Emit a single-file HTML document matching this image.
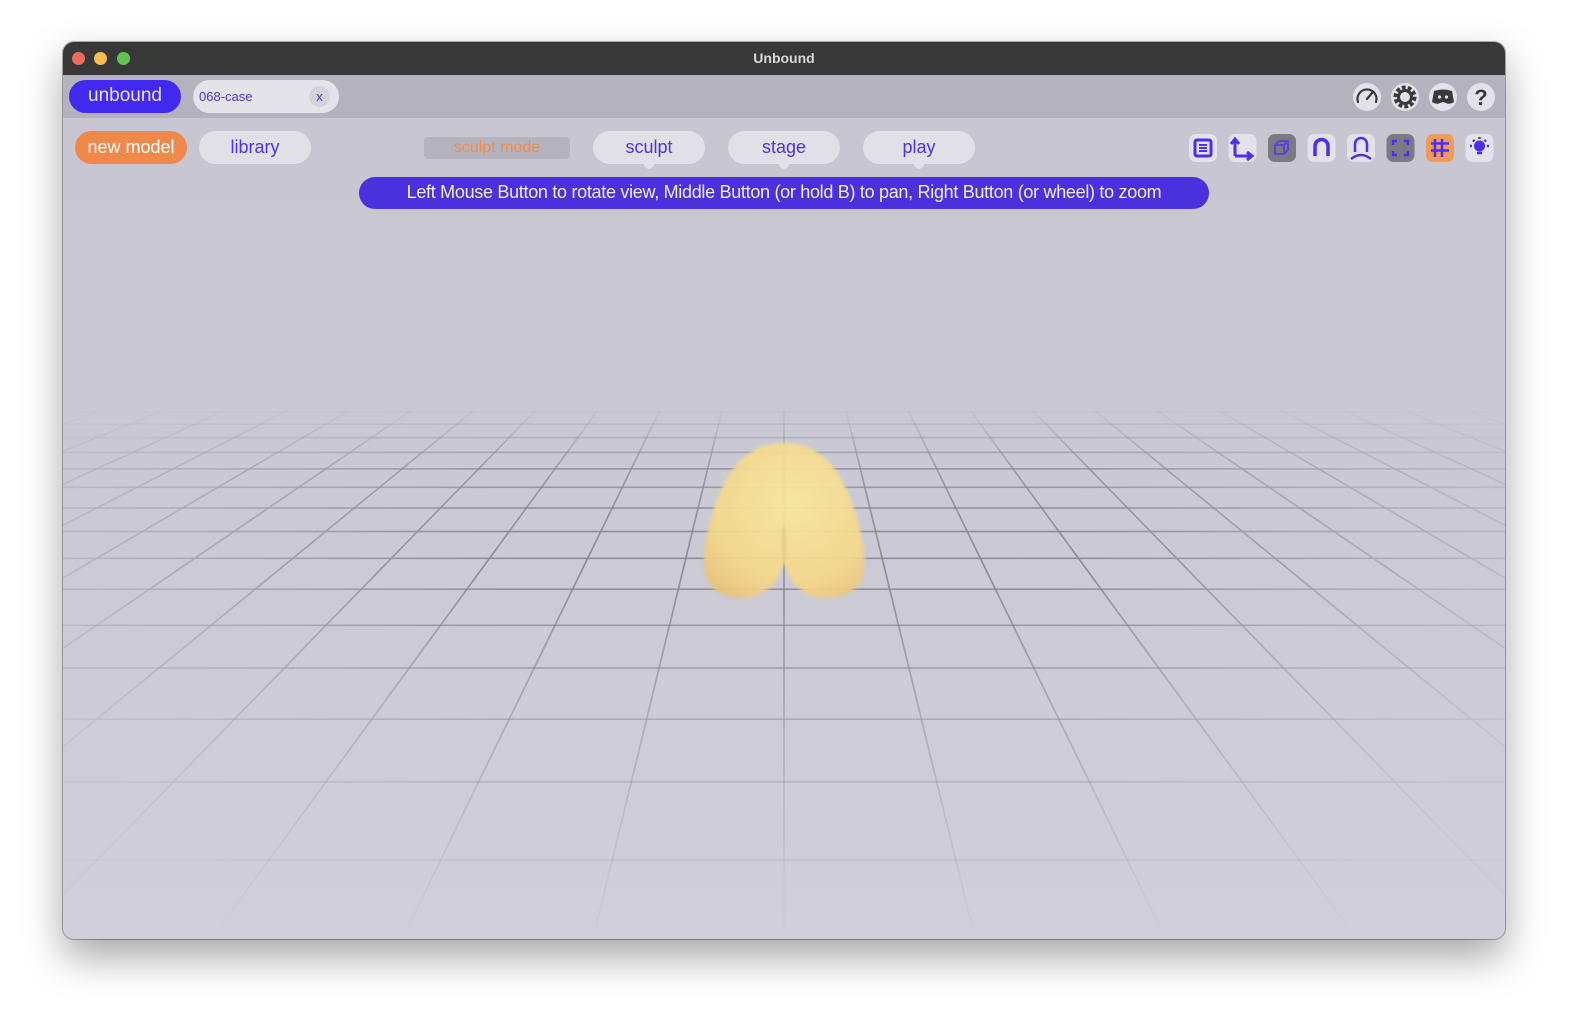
<!DOCTYPE html>
<html><head><meta charset="utf-8"><style>
*{margin:0;padding:0;box-sizing:border-box}
body{width:1570px;height:1024px;background:#fff;position:relative;overflow:hidden;font-family:"Liberation Sans",sans-serif}
.win{position:absolute;left:63px;top:42px;width:1442px;height:897px;border-radius:11px;overflow:hidden;box-shadow:0 18px 40px rgba(0,0,0,.35),0 0 0 1px rgba(0,0,0,.3);background:#cac9d3}
.title{position:absolute;left:0;top:0;width:100%;height:33px;background:#383838;color:#d8d8d8;font-weight:bold;font-size:14px;text-align:center;line-height:32px}
.dot{position:absolute;top:10px;width:13px;height:13px;border-radius:50%}
.tabs{position:absolute;left:0;top:33px;width:100%;height:43px;background:#b4b3bd}
.main{position:absolute;left:0;top:76px;width:100%;height:821px;background:linear-gradient(#c7c6d1,#cbc9d4 50%,#d0ced8);overflow:hidden}
.pill{position:absolute;border-radius:17px;text-align:center;font-size:18px}
</style></head><body>
<div class="win">
<div class="title">Unbound
<div class="dot" style="left:9px;background:#ec6a5e"></div>
<div class="dot" style="left:31px;background:#f4bf4f"></div>
<div class="dot" style="left:54px;background:#61c554"></div>
</div>
<div class="tabs"></div>
<div class="main">
<svg width="1570" height="1024" style="position:absolute;left:-63px;top:-118px">
<defs>
<linearGradient id="sg" gradientUnits="userSpaceOnUse" x1="0" y1="405" x2="0" y2="939">
<stop offset="0" stop-color="#878593" stop-opacity="0"/>
<stop offset="0.12" stop-color="#878593" stop-opacity="0.7"/>
<stop offset="0.3" stop-color="#878593" stop-opacity="0.9"/>
<stop offset="0.6" stop-color="#878593" stop-opacity="0.45"/>
<stop offset="1" stop-color="#878593" stop-opacity="0"/>
</linearGradient>
<linearGradient id="hg" gradientUnits="userSpaceOnUse" x1="63" y1="0" x2="1505" y2="0">
<stop offset="0" stop-color="#fff" stop-opacity="0.3"/>
<stop offset="0.3" stop-color="#fff" stop-opacity="1"/>
<stop offset="0.7" stop-color="#fff" stop-opacity="1"/>
<stop offset="1" stop-color="#fff" stop-opacity="0.3"/>
</linearGradient>
<mask id="hm" maskUnits="userSpaceOnUse" x="0" y="0" width="1570" height="1024"><rect x="0" y="0" width="1570" height="1024" fill="url(#hg)"/></mask>
<radialGradient id="bg" cx="0.55" cy="0.4" r="0.7">
<stop offset="0" stop-color="#f9e79e"/><stop offset="0.7" stop-color="#f6d98a"/><stop offset="1" stop-color="#e9c47c"/>
</radialGradient>
<filter id="bl" x="-10%" y="-10%" width="120%" height="120%"><feGaussianBlur stdDeviation="1.5"/></filter>
</defs>
<g stroke="url(#sg)" stroke-width="1.7" fill="none" mask="url(#hm)">
<path d="M0 960.6H1570M0 860H1570M0 781.8H1570M0 719.2H1570M0 668H1570M0 625.3H1570M0 589.2H1570M0 558.3H1570M0 531.5H1570M0 508H1570M0 487.3H1570M0 468.9H1570M0 452.4H1570M0 437.6H1570M0 424.2H1570M0 412H1570"/>
<path d="M784 410V939M846 410L975 939M908 410L1166 939M970 410L1357 939M1032 410L1548 939M1094 410L1740 939M1156 410L1931 939M1218 410L2122 939M1280 410L2313 939M1342 410L2504 939M1404 410L2695 939M1466 410L2886 939M1528 410L3077 939
M722 410L593 939M660 410L402 939M598 410L211 939M536 410L20 939M474 410L-172 939M412 410L-363 939M350 410L-554 939M288 410L-745 939M226 410L-936 939M164 410L-1127 939M102 410L-1318 939M40 410L-1509 939"/>
</g>
<g filter="url(#bl)">
<path d="M784 443C832 443 852 490 862 540C872 580 855 598 828 598C800 598 788 580 784 560C780 580 768 598 740 598C713 598 698 580 706 540C716 490 736 443 784 443Z" fill="url(#bg)" opacity="0.92"/>
<path d="M784 525V565" stroke="#d9b070" stroke-width="2" opacity="0.6"/>
</g>
</svg>
<!-- toolbar -->
<div class="pill" style="left:12px;top:13px;width:112px;height:33px;background:#f0884a;color:#fff;line-height:32px">new model</div>
<div class="pill" style="left:136px;top:13px;width:112px;height:33px;background:#e1e0e7;color:#4a35e0;line-height:32px">library</div>
<div class="pill" style="left:361px;top:19px;width:146px;height:22px;border-radius:4px;background:#b5b4be;color:#ef8a4c;font-size:16px;line-height:22px">sculpt mode</div>
<div class="pill" style="left:530px;top:13px;width:112px;height:33px;background:#e1e0e7;color:#4a35e0;line-height:32px">sculpt<div style="position:absolute;left:51px;top:28px;width:10px;height:10px;border-radius:50%;background:#e1e0e7"></div></div>
<div class="pill" style="left:665px;top:13px;width:112px;height:33px;background:#e1e0e7;color:#4a35e0;line-height:32px">stage<div style="position:absolute;left:51px;top:28px;width:10px;height:10px;border-radius:50%;background:#e1e0e7"></div></div>
<div class="pill" style="left:800px;top:13px;width:112px;height:33px;background:#e1e0e7;color:#4a35e0;line-height:32px">play<div style="position:absolute;left:51px;top:28px;width:10px;height:10px;border-radius:50%;background:#e1e0e7"></div></div>
<div class="pill" style="left:296px;top:59px;width:850px;height:32px;background:#4a31dc;color:#f0eeff;font-size:18px;line-height:31px;letter-spacing:-0.3px;white-space:nowrap">Left Mouse Button to rotate view, Middle Button (or hold B) to pan, Right Button (or wheel) to zoom</div>
<svg style="position:absolute;left:1126px;top:14px" width="310" height="32" fill="none" stroke="#4a2ff0" stroke-width="3">
<rect x="0" y="2" width="28" height="28" rx="7" fill="#e3e2ea" stroke="none"/>
<rect x="39.5" y="2" width="28" height="28" rx="7" fill="#e3e2ea" stroke="none"/>
<rect x="79" y="2" width="28" height="28" rx="7" fill="#7b7a84" stroke="none"/>
<rect x="118.5" y="2" width="28" height="28" rx="7" fill="#e3e2ea" stroke="none"/>
<rect x="158" y="2" width="28" height="28" rx="7" fill="#e3e2ea" stroke="none"/>
<rect x="197.5" y="2" width="28" height="28" rx="7" fill="#7b7a84" stroke="none"/>
<rect x="237" y="2" width="28" height="28" rx="7" fill="#f09a5a" stroke="none"/>
<rect x="276.5" y="2" width="28" height="28" rx="7" fill="#e3e2ea" stroke="none"/>
<rect x="6" y="8" width="16" height="16" rx="2"/><path d="M10 13H18M10 16H18M10 19H18" stroke-width="2"/>
<path d="M46 24H62M46 24V8M42 12L46 7L50 12M58 20L63 24L58 28" stroke-width="3"/>
<path d="M86 13L90 9H99V18L95 22H86ZM86 13H95V22M95 13L99 9" stroke="#5a45d0" stroke-width="2"/>
<path d="M126 24V14A6.5 6.5 0 0 1 139 14V24" stroke-width="3.5"/>
<path d="M166 20V12A6 6 0 0 1 178 12V20M162 27Q172 19 182 27" stroke-width="2.5"/>
<path d="M204 13V9H208M215 9H219V13M219 19V23H215M208 23H204V19" stroke="#4a2ff0" stroke-width="2.5"/>
<path d="M246 7V25M253 7V25M242 11.5H260M242 18.5H260" stroke-width="2.5"/>
<circle cx="290.5" cy="14" r="5.5" fill="#4a2ff0" stroke="none"/><path d="M288 21H293M290.5 5V7M281 14H283M298 14H300M284 8L285.5 9.5M297 8L295.5 9.5" stroke-width="2.5"/>
</svg>
</div>
<!-- tab bar -->
<div class="pill" style="left:6px;top:38px;width:112px;height:33px;background:#4229f0;color:#e8e6ff;font-size:19px;line-height:32px">unbound</div>
<div class="pill" style="left:130px;top:38px;width:146px;height:33px;background:#e4e3e9;color:#4a35e0;font-size:13px;line-height:33px;text-align:left;padding-left:6px">068-case
<div style="position:absolute;left:116px;top:6px;width:21px;height:21px;border-radius:50%;background:#d4d3db;font-size:13px;line-height:21px;text-align:center">x</div></div>
<svg style="position:absolute;left:1290px;top:39px" width="150" height="32">
<g fill="#e3e2ea"><circle cx="14" cy="16" r="14"/><circle cx="52" cy="16" r="14"/><circle cx="90" cy="16" r="14"/><circle cx="128" cy="16" r="14"/></g>
<g stroke="#3a3a3a" stroke-width="2.2" fill="none" stroke-linecap="round"><path d="M5 21A9.5 9.5 0 1 1 23 21"/><path d="M14 18L19 12"/></g>
<circle cx="52" cy="16" r="9" fill="none" stroke="#3a3a3a" stroke-width="5" stroke-dasharray="3.5 2.1"/><circle cx="52" cy="16" r="6.5" fill="none" stroke="#3a3a3a" stroke-width="3"/>
<path d="M81 10Q90 7 99 10L101 21Q96 24 93 22L90 21L87 22Q84 24 79 21Z" fill="#3a3a3a"/><circle cx="86.5" cy="16" r="1.6" fill="#e3e2ea"/><circle cx="93.5" cy="16" r="1.6" fill="#e3e2ea"/>
<text x="128" y="24" font-size="22" font-weight="bold" text-anchor="middle" fill="#3a3a3a" font-family="Liberation Sans">?</text>
</svg>
</div>
</body></html>
